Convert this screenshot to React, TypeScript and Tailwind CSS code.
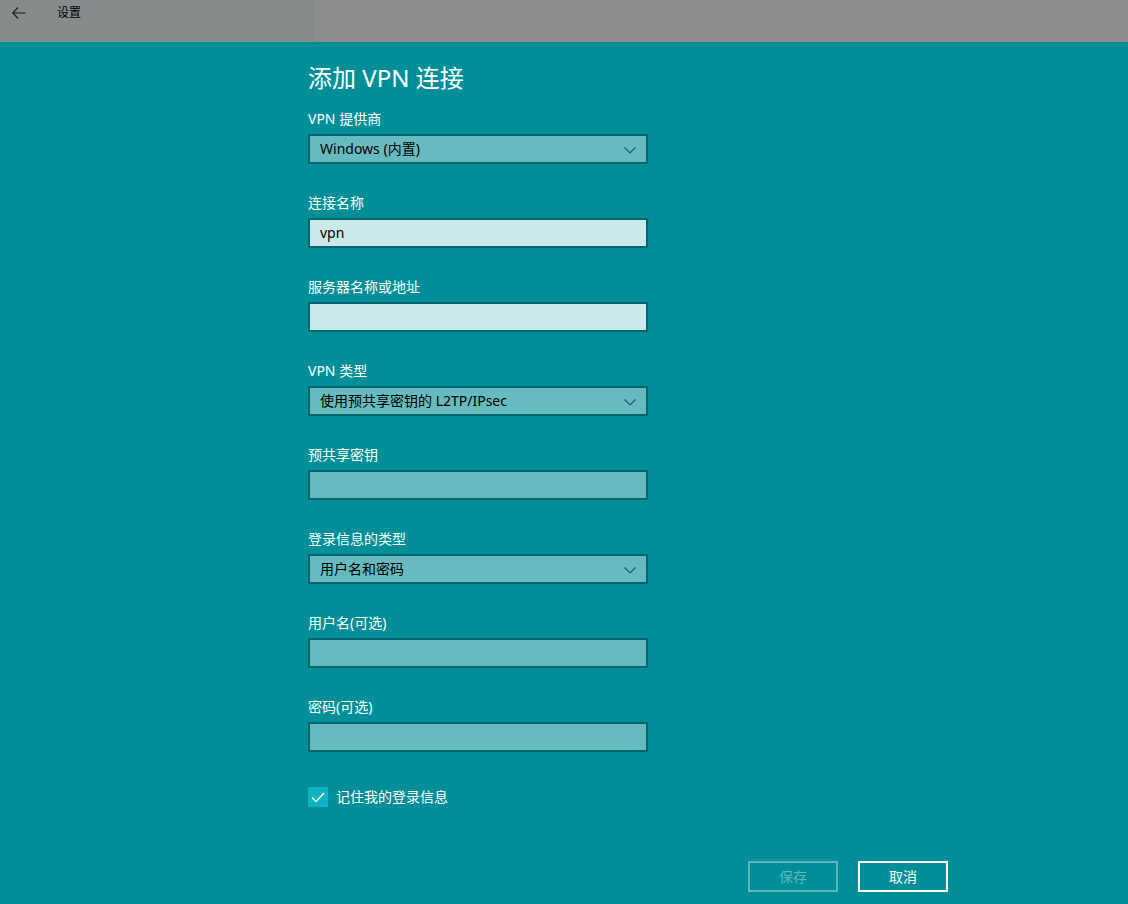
import React from "react";

const font = {
  fontFamily: '"Segoe UI", "Noto Sans", "Noto Sans CJK SC", sans-serif',
};

function Chevron() {
  return (
    <svg width="12" height="7" viewBox="0 0 12 7" className="absolute right-[10px] top-[11px]">
      <path d="M0.5 0.5 L6 6 L11.5 0.5" fill="none" stroke="#1f5b60" strokeWidth="1.2" />
    </svg>
  );
}

function Field({
  label,
  value,
  kind,
}: {
  label: string;
  value?: string;
  kind: "select" | "light" | "dark";
}) {
  const bg =
    kind === "light" ? "bg-[#cbe9eb]" : "bg-[#66bbc1]";
  return (
    <div className="mb-[29px] flex flex-col">
      <div className="h-5 text-[14px] leading-5 text-white">{label}</div>
      <div
        className={`relative mt-[5px] h-[30px] w-[340px] border-2 border-[#00656d] ${bg} pl-[10px] text-[14px] leading-[26px] text-black`}
      >
        {value}
        {kind === "select" && <Chevron />}
      </div>
    </div>
  );
}

export default function App() {
  return (
    <div className="flex h-[904px] w-[1128px] flex-col overflow-hidden bg-[#008f99]" style={font}>
      <div className="flex h-[42px] shrink-0">
        <div className="flex w-[315px] items-start bg-[#878b8c]">
          <svg width="14" height="12" viewBox="0 0 14 12" className="ml-[12px] mt-[7px]">
            <path d="M6 0.5 L0.8 6 L6 11.5 M0.8 6 L13.5 6" fill="none" stroke="#1a1a1a" strokeWidth="1.1" />
          </svg>
          <span className="ml-[31px] mt-[5px] text-[12px] leading-4 text-black">设置</span>
        </div>
        <div className="flex-1 bg-[#8e8e8e]" />
      </div>
      <div className="flex flex-col pl-[308px]">
        <div className="mt-[20px] h-8 text-[24px] leading-8 text-white">添加 VPN 连接</div>
        <div className="mt-[15px] flex flex-col">
          <Field label="VPN 提供商" value="Windows (内置)" kind="select" />
          <Field label="连接名称" value="vpn" kind="light" />
          <Field label="服务器名称或地址" kind="light" />
          <Field label="VPN 类型" value="使用预共享密钥的 L2TP/IPsec" kind="select" />
          <Field label="预共享密钥" kind="dark" />
          <Field label="登录信息的类型" value="用户名和密码" kind="select" />
          <Field label="用户名(可选)" kind="dark" />
          <Field label="密码(可选)" kind="dark" />
        </div>
        <div className="mt-[6px] flex items-center">
          <div className="flex h-5 w-5 items-center justify-center bg-[#0cb4c3]">
            <svg width="14" height="11" viewBox="0 0 14 11">
              <path d="M1 5.5 L5 9.5 L13 1" fill="none" stroke="white" strokeWidth="1.4" />
            </svg>
          </div>
          <span className="ml-[8px] text-[14px] leading-5 text-white">记住我的登录信息</span>
        </div>
      </div>
      <div className="mt-[54px] flex pl-[748px]">
        <div className="flex h-[31px] w-[90px] items-center justify-center border-2 border-[#5bb6bd] text-[14px] text-[#5bb6bd]">
          保存
        </div>
        <div className="ml-[20px] flex h-[31px] w-[90px] items-center justify-center border-2 border-white text-[14px] text-white">
          取消
        </div>
      </div>
    </div>
  );
}
